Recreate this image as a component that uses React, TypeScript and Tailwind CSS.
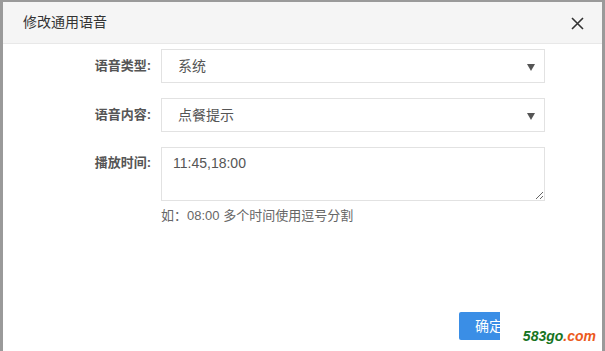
import React from 'react';

const font = { fontFamily: '"Liberation Sans", "Noto Sans CJK SC", sans-serif' };

const SelectBox = ({ value }: { value: string }) => (
  <div className="relative flex h-[34px] w-[384px] items-center border border-[#e2e2e2] bg-white pl-[16px] text-[14px] text-[#555]">
    {value}
    <span className="absolute right-[9px] top-[14px] h-0 w-0 border-x-[4px] border-t-[7px] border-x-transparent border-t-[#555]" />
  </div>
);

export default function App() {
  return (
    <div className="h-[351px] w-[605px] overflow-hidden bg-[#9a9a9a] pl-[3px] pt-[2px]" style={font}>
      <div className="relative h-[349px] w-[599px] bg-white">
        <div className="flex h-[42px] items-center justify-between border-b border-[#e8e8e8] bg-[#f5f5f5] pl-[20px] pr-[18px]">
          <span className="text-[14px] text-[#333]">修改通用语音</span>
          <svg width="13" height="13" viewBox="0 0 13 13" className="mt-[2px]">
            <path d="M1 1L12 12M12 1L1 12" stroke="#333" strokeWidth="1.6" />
          </svg>
        </div>

        <div className="grid grid-cols-[148px_384px] gap-x-[10px] gap-y-[15px] pt-[5px]">
          <div className="flex h-[34px] items-center justify-end text-[13px] font-bold text-[#555]">语音类型:</div>
          <SelectBox value="系统" />

          <div className="flex h-[34px] items-center justify-end text-[13px] font-bold text-[#555]">语音内容:</div>
          <SelectBox value="点餐提示" />

          <div className="flex justify-end pt-[6px] text-[13px] font-bold text-[#555]">播放时间:</div>
          <div>
            <textarea
              readOnly
              defaultValue="11:45,18:00"
              className="block h-[54px] w-[384px] border border-[#e2e2e2] px-[11px] py-[5px] text-[14px] text-[#555] outline-none"
              style={font}
            />
            <div className="mt-[5px] text-[13px] text-[#666]">如：08:00 多个时间使用逗号分割</div>
          </div>
        </div>

        {/* the footer button is cut off by the dialog edge in the screenshot */}
        <div className="absolute left-[456px] top-[310px] w-[41px] overflow-hidden">
          <button className="flex h-[28px] w-[60px] items-center rounded-[2px] bg-[#3a8ee6] pl-[16px] text-[14px] text-white">
            确定
          </button>
        </div>

        <div className="absolute bottom-[4px] right-[6px] text-[14px] font-bold italic">
          <span className="text-[#17741f]">583go</span>
          <span className="text-[#ec5a1c]">.com</span>
        </div>
      </div>
    </div>
  );
}
